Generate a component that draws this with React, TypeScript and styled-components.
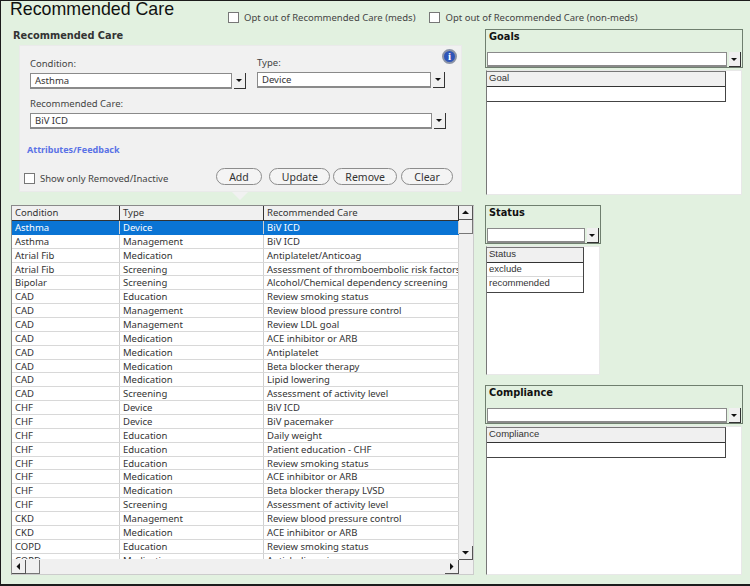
import styled, { createGlobalStyle } from "styled-components";

const GlobalStyle = createGlobalStyle`
  html, body {
    margin: 0;
    padding: 0;
    background: #e2f1e0;
  }
`;

const uiFont = `"Noto Sans", "DejaVu Sans", sans-serif`;

const Page = styled.div`
  box-sizing: border-box;
  width: 750px;
  height: 586px;
  overflow: hidden;
  background: #e2f1e0;
  border-top: 1px solid #1c1c1c;
  border-left: 1px solid #1c1c1c;
  border-bottom: 2px solid #1c1c1c;
  font-family: ${uiFont};
  font-size: 9.5px;
  color: #333;
`;

const TopBar = styled.div`
  display: flex;
  height: 28px;
  padding-left: 9px;
`;

const Title = styled.div`
  width: 218px;
  font-family: "Liberation Sans", sans-serif;
  font-size: 17.8px;
  line-height: 17px;
  color: #111;
`;

const OptOut = styled.label`
  display: flex;
  align-items: center;
  gap: 5px;
  height: 14px;
  margin-top: 9px;
  margin-right: 14px;
  color: #444;
`;

const Check = styled.span`
  box-sizing: border-box;
  display: block;
  width: 11px;
  height: 11px;
  background: #fff;
  border: 1px solid #777;
`;

const Body = styled.div`
  display: flex;
  padding-left: 10px;
`;

const LeftColumn = styled.div`
  width: 463px;
  margin-right: 11px;
`;

const SectionTitle = styled.div`
  margin-left: 2px;
  height: 16px;
  font-family: "DejaVu Sans", sans-serif;
  font-size: 9.8px;
  font-weight: 700;
  line-height: 13px;
  color: #333;
`;

const EditPanel = styled.div`
  position: relative;
  box-sizing: border-box;
  width: 443px;
  height: 147px;
  margin-left: 8px;
  padding: 10px 8px 0 10px;
  background: #f1f1f1;
  border: 1px solid #eaeaea;

  &::after {
    content: "";
    position: absolute;
    left: 212px;
    bottom: -9px;
    border-left: 8px solid transparent;
    border-right: 8px solid transparent;
    border-top: 8px solid #f1f1f1;
  }
`;

const InfoBadge = styled.span`
  position: absolute;
  top: 3px;
  right: 4px;
  width: 15px;
  height: 15px;
  box-sizing: border-box;
  border-radius: 50%;
  border: 2px solid #8b93a6;
  background: #2f55b8;
  color: #fff;
  font: 700 11px/11px "Liberation Serif", serif;
  text-align: center;
`;

const FieldRow = styled.div`
  display: flex;
`;

const Field = styled.div<{ $width: number; $gap?: number; $lift?: number }>`
  width: ${(p) => p.$width}px;
  margin-right: ${(p) => p.$gap ?? 0}px;
  margin-top: ${(p) => -(p.$lift ?? 0)}px;
`;

const FieldLabel = styled.div<{ $top?: number }>`
  height: 14px;
  line-height: 15px;
  margin-top: ${(p) => p.$top ?? 0}px;
  margin-bottom: 3px;
  color: #444;
`;

const Combo = styled.div<{ $height?: number }>`
  display: flex;
  align-items: stretch;
  height: ${(p) => p.$height ?? 16}px;
`;

const ComboInput = styled.div`
  flex: 1;
  box-sizing: border-box;
  min-width: 0;
  padding-left: 4px;
  background: #fff;
  border: 1px solid #8a8a8a;
  border-width: 1px 1px 2px 1px;
  line-height: 14px;
  color: #333;
`;

const ComboButton = styled.span`
  position: relative;
  box-sizing: border-box;
  width: 12px;
  margin-left: 2px;
  background: #f0f0f0;
  border-right: 1px solid #333;
  border-bottom: 1px solid #333;

  &::after {
    content: "";
    position: absolute;
    left: 2px;
    top: 6px;
    border-left: 3.5px solid transparent;
    border-right: 3.5px solid transparent;
    border-top: 3.5px solid #111;
  }
`;

const FeedbackLink = styled.a`
  display: block;
  margin-top: 14px;
  margin-left: -3px;
  height: 14px;
  line-height: 14px;
  font-size: 9px;
  font-weight: 700;
  color: #5a72e6;
`;

const ActionRow = styled.div`
  display: flex;
  align-items: center;
  margin-top: 11px;
  margin-left: -6px;
`;

const InactiveToggle = styled.label`
  display: flex;
  align-items: center;
  gap: 5px;
  width: 188px;
  padding-top: 4px;
  color: #444;
`;

const PillButton = styled.button<{ $width: number; $gap: number }>`
  box-sizing: border-box;
  width: ${(p) => p.$width}px;
  height: 17px;
  margin-left: ${(p) => p.$gap}px;
  padding: 0;
  background: #f4f4f4;
  border: 1px solid #8c8c8c;
  border-radius: 9px;
  font-family: ${uiFont};
  font-size: 10.5px;
  line-height: 14px;
  color: #333;
`;

const GridFrame = styled.div`
  position: relative;
  box-sizing: border-box;
  width: 463px;
  height: 370px;
  margin-top: 13px;
  background: #f0f0f0;
  border: 1px solid #8a8a8a;
  border-bottom-color: #ccc;
  border-right-color: #ccc;
`;

const GridViewport = styled.div`
  width: 447px;
  height: 353px;
  overflow: hidden;
  background: #fff;
`;

const Row = styled.div<{ $head?: boolean; $selected?: boolean }>`
  display: grid;
  grid-template-columns: 108px 144px 195px;
  height: ${(p) => (p.$head ? "15px" : "13.87px")};
  box-sizing: border-box;
  line-height: ${(p) => (p.$head ? 14 : 13)}px;
  background: ${(p) => (p.$selected ? "#0a74d4" : p.$head ? "#f0f0f0" : "#fff")};
  color: ${(p) => (p.$selected ? "#fff" : "#333")};
  border-bottom: 1px solid ${(p) => (p.$head ? "#333" : p.$selected ? "#0a74d4" : "#d8d8d8")};
`;

const Cell = styled.div<{ $head?: boolean }>`
  padding-left: 3px;
  white-space: nowrap;
  overflow: hidden;
  border-right: 1px solid ${(p) => (p.$head ? "#333" : "#d0d0d0")};
`;

const VerticalBar = styled.div`
  position: absolute;
  top: 0;
  right: 0;
  width: 14px;
  height: 354px;
  display: flex;
  flex-direction: column;
  justify-content: space-between;
`;

const HorizontalBar = styled.div`
  position: absolute;
  left: 0;
  bottom: 0;
  width: 447px;
  height: 15px;
  display: flex;
  justify-content: space-between;
  align-items: center;
`;

const ScrollButton = styled.span`
  display: flex;
  align-items: center;
  justify-content: center;
  box-sizing: border-box;
  width: 14px;
  height: 14px;
  background: #f0f0f0;
  border-right: 1px solid #555;
  border-bottom: 1px solid #555;
`;

const ScrollThumb = styled.span`
  box-sizing: border-box;
  display: block;
  width: 14px;
  height: 14px;
  background: #f0f0f0;
  border-right: 1px solid #777;
  border-bottom: 1px solid #777;
`;

const VerticalStart = styled.div`
  display: flex;
  flex-direction: column;
`;

const HorizontalStart = styled.div`
  display: flex;
`;

const RightColumn = styled.div`
  display: flex;
  flex-direction: column;
`;

const Group = styled.div<{ $width: number; $gap?: number }>`
  box-sizing: border-box;
  width: ${(p) => p.$width}px;
  margin-bottom: ${(p) => p.$gap ?? 0}px;
`;

const GroupHead = styled.div`
  box-sizing: border-box;
  height: 39px;
  padding: 0 1px;
  border: 1px solid #6f7f6f;
`;

const GroupTitle = styled.div`
  height: 22px;
  padding-left: 2px;
  font-family: "DejaVu Sans", sans-serif;
  font-size: 9.8px;
  font-weight: 700;
  line-height: 14px;
  color: #111;
`;

const ListBox = styled.div<{ $height: number }>`
  box-sizing: border-box;
  height: ${(p) => p.$height}px;
  margin: 2px 1px 0;
  background: #fff;
  border: 1px solid #e8e8e8;
  border-left-color: #777;
`;

const MiniGrid = styled.div<{ $width: number }>`
  box-sizing: border-box;
  width: ${(p) => p.$width}px;
  border-top: 1px solid #777;
  border-right: 1px solid #444;
  border-bottom: 1px solid #444;
  font-family: "Liberation Sans", sans-serif;
  font-size: 9.5px;
`;

const MiniCell = styled.div<{ $head?: boolean; $last?: boolean }>`
  box-sizing: border-box;
  height: 14.5px;
  padding-left: 2px;
  line-height: 12px;
  background: ${(p) => (p.$head ? "#f0f0f0" : "#fff")};
  border-bottom: ${(p) => (p.$last ? "none" : p.$head ? "1px solid #333" : "1px solid #d8d8d8")};
  color: #333;
`;

const Arrow = ({ d }: { d: string }) => (
  <svg width="7" height="7" viewBox="0 0 7 7">
    <path d={d} fill="#111" />
  </svg>
);

const rows = [
  ["Asthma", "Device", "BiV ICD"],
  ["Asthma", "Management", "BiV ICD"],
  ["Atrial Fib", "Medication", "Antiplatelet/Anticoag"],
  ["Atrial Fib", "Screening", "Assessment of thromboembolic risk factors"],
  ["Bipolar", "Screening", "Alcohol/Chemical dependency screening"],
  ["CAD", "Education", "Review smoking status"],
  ["CAD", "Management", "Review blood pressure control"],
  ["CAD", "Management", "Review LDL goal"],
  ["CAD", "Medication", "ACE inhibitor or ARB"],
  ["CAD", "Medication", "Antiplatelet"],
  ["CAD", "Medication", "Beta blocker therapy"],
  ["CAD", "Medication", "Lipid lowering"],
  ["CAD", "Screening", "Assessment of activity level"],
  ["CHF", "Device", "BiV ICD"],
  ["CHF", "Device", "BiV pacemaker"],
  ["CHF", "Education", "Daily weight"],
  ["CHF", "Education", "Patient education - CHF"],
  ["CHF", "Education", "Review smoking status"],
  ["CHF", "Medication", "ACE inhibitor or ARB"],
  ["CHF", "Medication", "Beta blocker therapy LVSD"],
  ["CHF", "Screening", "Assessment of activity level"],
  ["CKD", "Management", "Review blood pressure control"],
  ["CKD", "Medication", "ACE inhibitor or ARB"],
  ["COPD", "Education", "Review smoking status"],
  ["COPD", "Medication", "Anticholinergics"],
];

const SideGroup = ({
  title,
  width,
  listHeight,
  gridWidth,
  gap,
  items,
}: {
  title: string;
  width: number;
  listHeight: number;
  gridWidth: number;
  gap: number;
  items: string[];
}) => (
  <Group $width={width} $gap={gap}>
    <GroupHead>
      <GroupTitle>{title}</GroupTitle>
      <Combo $height={15}>
        <ComboInput />
        <ComboButton />
      </Combo>
    </GroupHead>
    <ListBox $height={listHeight}>
      <MiniGrid $width={gridWidth}>
        <MiniCell $head>{title === "Goals" ? "Goal" : title}</MiniCell>
        {items.map((item, i) => (
          <MiniCell key={i} $last={i === items.length - 1}>
            {item}
          </MiniCell>
        ))}
      </MiniGrid>
    </ListBox>
  </Group>
);

export default function App() {
  return (
    <Page>
      <GlobalStyle />
      <TopBar>
        <Title>Recommended Care</Title>
        <OptOut>
          <Check />
          Opt out of Recommended Care (meds)
        </OptOut>
        <OptOut>
          <Check />
          Opt out of Recommended Care (non-meds)
        </OptOut>
      </TopBar>
      <Body>
        <LeftColumn>
          <SectionTitle>Recommended Care</SectionTitle>
          <EditPanel>
            <InfoBadge>i</InfoBadge>
            <FieldRow>
              <Field $width={216} $gap={11}>
                <FieldLabel>Condition:</FieldLabel>
                <Combo>
                  <ComboInput>Asthma</ComboInput>
                  <ComboButton />
                </Combo>
              </Field>
              <Field $width={188} $lift={1}>
                <FieldLabel>Type:</FieldLabel>
                <Combo>
                  <ComboInput>Device</ComboInput>
                  <ComboButton />
                </Combo>
              </Field>
            </FieldRow>
            <Field $width={416}>
              <FieldLabel $top={7}>Recommended Care:</FieldLabel>
              <Combo>
                <ComboInput>BiV ICD</ComboInput>
                <ComboButton />
              </Combo>
            </Field>
            <FeedbackLink>Attributes/Feedback</FeedbackLink>
            <ActionRow>
              <InactiveToggle>
                <Check />
                Show only Removed/Inactive
              </InactiveToggle>
              <PillButton $width={47} $gap={4}>Add</PillButton>
              <PillButton $width={61} $gap={7}>Update</PillButton>
              <PillButton $width={64} $gap={3}>Remove</PillButton>
              <PillButton $width={52} $gap={4}>Clear</PillButton>
            </ActionRow>
          </EditPanel>
          <GridFrame>
            <GridViewport>
              <Row $head>
                <Cell $head>Condition</Cell>
                <Cell $head>Type</Cell>
                <Cell $head>Recommended Care</Cell>
              </Row>
              {rows.map((r, i) => (
                <Row key={i} $selected={i === 0}>
                  {r.map((c, j) => (
                    <Cell key={j}>{c}</Cell>
                  ))}
                </Row>
              ))}
            </GridViewport>
            <VerticalBar>
              <VerticalStart>
                <ScrollButton>
                  <Arrow d="M3.5 1.5 7 5H0z" />
                </ScrollButton>
                <ScrollThumb />
              </VerticalStart>
              <ScrollButton>
                <Arrow d="M0 2h7L3.5 5.5z" />
              </ScrollButton>
            </VerticalBar>
            <HorizontalBar>
              <HorizontalStart>
                <ScrollButton>
                  <Arrow d="M1.5 3.5 5 0v7z" />
                </ScrollButton>
                <ScrollThumb />
              </HorizontalStart>
              <ScrollButton>
                <Arrow d="M2 0l3.5 3.5L2 7z" />
              </ScrollButton>
            </HorizontalBar>
          </GridFrame>
        </LeftColumn>
        <RightColumn>
          <SideGroup title="Goals" width={258} listHeight={125} gridWidth={239} gap={10} items={[""]} />
          <SideGroup title="Status" width={116} listHeight={129} gridWidth={97} gap={10} items={["exclude", "recommended"]} />
          <SideGroup title="Compliance" width={258} listHeight={149} gridWidth={239} gap={0} items={[""]} />
        </RightColumn>
      </Body>
    </Page>
  );
}
